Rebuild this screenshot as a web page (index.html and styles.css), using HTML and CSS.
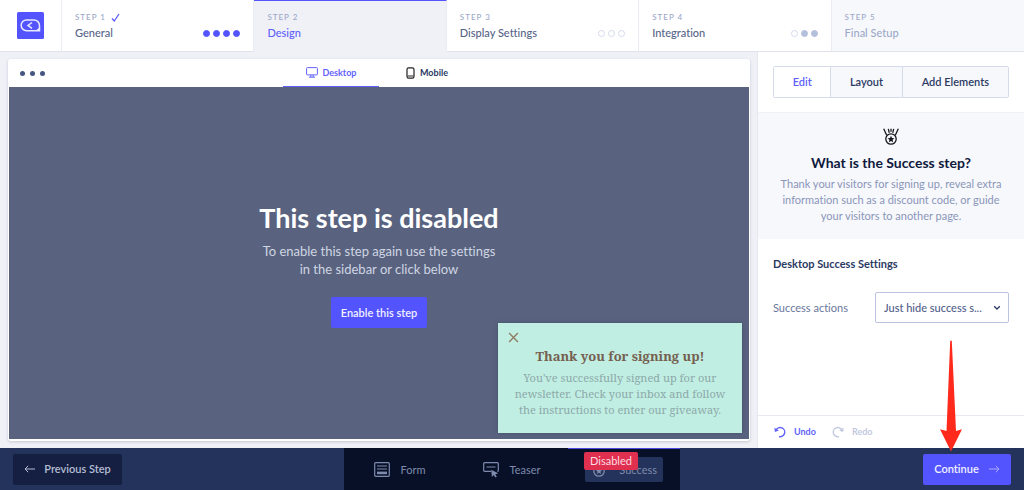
FILE: index.html
```html
<!DOCTYPE html>
<html lang="en">
<head>
<meta charset="utf-8">
<meta name="viewport" content="width=device-width, initial-scale=1">
<title>Campaign editor</title>
<link rel="stylesheet" href="styles.css">
</head>
<body>
<div class="app">
  <header class="steps">
    <a class="brand" href="#" aria-label="Home">
      <svg class="logo" viewBox="0 0 27 27" aria-hidden="true">
        <rect width="27" height="27" rx="1.5" fill="#5454ff"/>
        <path d="M9.500 8h7.500a5.500 5.500 0 0 1 5.500 5.500v5.200H9.500a5.350 5.350 0 0 1 0-10.700z" fill="none" stroke="#e8e9ff" stroke-width="1.500"/>
        <path d="M22.500 15.500v3.200H18.500z" fill="#e8e9ff"/>
        <path d="M15 10.500l-4 2.900 4 2.900" fill="none" stroke="#e8e9ff" stroke-width="1.500"/>
      </svg>
    </a>
    <a class="step" href="#">
      <span class="step-no">STEP 1
        <svg class="check" viewBox="0 0 9 9" aria-hidden="true"><path d="M1 5.500l2.300 2.500L8 1" fill="none" stroke="#5c5cff" stroke-width="1.300"/></svg>
      </span>
      <span class="step-row"><span class="step-name">General</span>
        <span class="dots"><i class="dot done"></i><i class="dot done"></i><i class="dot done"></i><i class="dot done"></i></span></span>
    </a>
    <a class="step current" href="#">
      <span class="step-no">STEP 2</span>
      <span class="step-row"><span class="step-name">Design</span></span>
    </a>
    <a class="step" href="#">
      <span class="step-no">STEP 3</span>
      <span class="step-row"><span class="step-name">Display Settings</span>
        <span class="dots"><i class="dot"></i><i class="dot"></i><i class="dot"></i></span></span>
    </a>
    <a class="step" href="#">
      <span class="step-no">STEP 4</span>
      <span class="step-row"><span class="step-name">Integration</span>
        <span class="dots"><i class="dot"></i><i class="dot part"></i><i class="dot part"></i></span></span>
    </a>
    <a class="step locked" href="#">
      <span class="step-no">STEP 5</span>
      <span class="step-row"><span class="step-name">Final Setup</span></span>
    </a>
  </header>

  <div class="work">
    <main class="stage">
      <div class="browser">
        <div class="browser-bar">
          <span class="window-dots"><i></i><i></i><i></i></span>
          <div class="devices">
            <button class="device active" type="button">
              <svg class="i-desktop" viewBox="0 0 12 11" aria-hidden="true"><g fill="none" stroke="currentColor"><rect x=".6" y=".6" width="10.800" height="7.300" rx=".8"/><path d="M4.800 8v2M7.200 8v2M3 10.200h6"/></g></svg>
              Desktop
            </button>
            <button class="device" type="button">
              <svg class="i-mobile" viewBox="0 0 9 12" aria-hidden="true"><rect x="1" y=".8" width="7" height="10.400" rx="1.600" fill="none" stroke="#222" stroke-width="1.200"/><path d="M1.500 9h6" stroke="#222"/></svg>
              Mobile
            </button>
          </div>
        </div>
        <div class="preview">
          <div class="disabled-note">
            <h1>This step is disabled</h1>
            <p>To enable this step again use the settings<br>in the sidebar or click below</p>
            <button class="btn primary enable" type="button">Enable this step</button>
          </div>
          <section class="popup">
            <button class="close" type="button" aria-label="Close">
              <svg viewBox="0 0 12 12" aria-hidden="true"><path d="M1.200 1.200l9.600 9.600M10.800 1.200L1.200 10.800" stroke="#8f7d63" stroke-width="1.500"/></svg>
            </button>
            <h2>Thank you for signing up!</h2>
            <p>You've successfully signed up for our newsletter. Check your inbox and follow the instructions to enter our giveaway.</p>
          </section>
        </div>
      </div>
    </main>

    <aside class="sidebar">
      <div class="modes">
        <button class="mode active" type="button">Edit</button>
        <button class="mode" type="button">Layout</button>
        <button class="mode" type="button">Add Elements</button>
      </div>
      <section class="about">
        <svg class="i-medal" viewBox="1 0 16 17" aria-hidden="true"><g fill="none" stroke="#15151c" stroke-width="1.300"><circle cx="9" cy="11" r="5.200"/><path d="M1.700.8l3 6.400M16.300.8l-3 6.400M6.300.8l1 4M11.700.8l-1 4M9 .8v3"/></g><path d="M9 7.700l1 2.200 2.400.3-1.800 1.600.5 2.400L9 13l-2.100 1.200.5-2.400-1.800-1.600 2.400-.3z" fill="#15151c"/></svg>
        <h2>What is the Success step?</h2>
        <p>Thank your visitors for signing up, reveal extra information such as a discount code, or guide your visitors to another page.</p>
      </section>
      <section class="settings">
        <h3>Desktop Success Settings</h3>
        <div class="field">
          <label for="action">Success actions</label>
          <span class="select-wrap">
            <select id="action"><option>Just hide success s...</option></select>
            <svg class="chevron" viewBox="0 0 8 6" aria-hidden="true"><path d="M1.200 1.200L4 4l2.800-2.800" fill="none" stroke="#2b3a63" stroke-width="1.300"/></svg>
          </span>
        </div>
      </section>
      <div class="history">
        <button class="undo" type="button">
          <svg viewBox="0 0 12 12" aria-hidden="true"><path d="M2 4.200A4.600 4.600 0 1 1 5 10.600" fill="none" stroke="currentColor" stroke-width="1.400"/><path d="M.3 1.800l.6 4.200 4-1.400z" fill="currentColor"/></svg>
          Undo
        </button>
        <button class="redo" type="button" disabled>
          <svg viewBox="0 0 12 12" aria-hidden="true"><path d="M10 4.200A4.600 4.600 0 1 0 7 10.600" fill="none" stroke="currentColor" stroke-width="1.400"/><path d="M11.700 1.800l-.6 4.200-4-1.400z" fill="currentColor"/></svg>
          Redo
        </button>
      </div>
    </aside>
  </div>

  <footer class="footer">
    <button class="btn previous" type="button">
      <svg class="arrow" viewBox="0 0 11 8" aria-hidden="true"><path d="M11 4H1M4.200.8L1 4l3.200 3.200" fill="none" stroke="currentColor"/></svg>
      Previous Step
    </button>
    <nav class="views">
      <a class="view" href="#">
        <svg class="i-form" viewBox="0 0 16 15" aria-hidden="true"><rect x=".7" y=".7" width="14.600" height="13.600" rx="1" fill="none" stroke="currentColor" stroke-width="1.200"/><path d="M3 4h10M3 7h10" stroke="currentColor" stroke-width="1.100"/><path d="M3 9.600h10v2.600H3z" fill="currentColor"/></svg>
        Form
      </a>
      <a class="view" href="#">
        <svg class="i-teaser" viewBox="0 0 16 16" aria-hidden="true"><path d="M8 9.400H1.600a.9.900 0 0 1-.9-.9V1.600a.9.900 0 0 1 .9-.9h12.800a.9.900 0 0 1 .9.900v6.900a.9.900 0 0 1-.9.900M3.500 5h9" fill="none" stroke="currentColor" stroke-width="1.200"/><path d="M8.200 7.800l7 3.400-2.900 1 1.500 2.500-1.500.9-1.500-2.500-1.900 2z" fill="currentColor"/></svg>
        Teaser
      </a>
      <a class="view active" href="#">
        <span class="chip">
          <svg class="i-success" viewBox="0 0 14 14" aria-hidden="true"><circle cx="7" cy="8" r="5.200" fill="none" stroke="currentColor" stroke-width="1.300"/><path d="M7 5l.9 2 2.200.2-1.600 1.500.4 2.200L7 9.800l-1.900 1.100.4-2.200-1.600-1.500L6.100 7z" fill="currentColor"/></svg>
          Success
          <span class="badge">Disabled</span>
        </span>
      </a>
    </nav>
    <div class="forward">
      <button class="btn primary continue" type="button">
        Continue
        <svg class="arrow" viewBox="0 0 11 8" aria-hidden="true"><path d="M0 4h10M6.800.8L10 4 6.800 7.200" fill="none" stroke="#a9a9ff"/></svg>
      </button>
      <svg class="pointer" viewBox="0 0 24 112" aria-hidden="true"><path d="M11.200 1q.8-1.200 1.600 0L17 91l6-1.800L12 111.500 1 89.200 7.500 91z" fill="#ff2a1c"/></svg>
    </div>
  </footer>
</div>
</body>
</html>
```
FILE: styles.css
```css
* { box-sizing: border-box; }

body {
  margin: 0;
  font-family: Lato, "Liberation Sans", sans-serif;
  font-size: 11px;
  font-variant-ligatures: none;
  line-height: 16px;
  color: #2b3a63;
}

h1, h2, h3, p { margin: 0; }
a { color: inherit; text-decoration: none; }
svg { display: block; flex: none; }

button, select {
  font: inherit;
  color: inherit;
  margin: 0;
  padding: 0;
  border: 0;
  background: none;
}

.app {
  min-height: 100vh;
  display: flex;
  flex-direction: column;
  background: #f0f1f7;
}

/* Step navigation */
.steps {
  display: grid;
  grid-template-columns: 62px repeat(5, 1fr);
  min-height: 52px;
}
.brand, .step {
  background: #fff;
  border-right: 1px solid #eaecf5;
  border-bottom: 1px solid #e1e3ec;
}
.brand { display: grid; place-items: center; }
.logo { width: 27px; height: 27px; }
.step {
  display: flex;
  flex-direction: column;
  padding: 11px 13px 8px 13px;
  color: #566488;
}
.step-no {
  display: flex;
  align-items: center;
  gap: 5px;
  font-size: 8px;
  line-height: 12px;
  letter-spacing: 1px;
  font-weight: 500;
  color: #9ca8c8;
}
.check { width: 9px; height: 9px; }
.step-row {
  display: flex;
  align-items: center;
  justify-content: space-between;
  font-weight: 500;
  line-height: 20px;
}
.dots { display: flex; gap: 3px; }
.dot {
  width: 7px;
  height: 7px;
  border-radius: 50%;
  border: 1px solid #d5daea;
}
.dot.done { background: #5454ff; border-color: #5454ff; }
.dot.part { background: #b5c0dc; border-color: #b5c0dc; }
.step.current {
  background: none;
  color: #6060fa;
  border-bottom-color: transparent;
  border-top: 1px solid #5454ff;
  padding-top: 10px;
}
.step.locked {
  background: #f7f8fc;
  color: #9ca8c8;
  border-right: 0;
}

/* Work area */
.work {
  flex: 1;
  display: grid;
  grid-template-columns: 1fr 267px;
}
.stage { display: flex; padding: 7px 7px 7px 8px; }
.browser {
  flex: 1;
  display: flex;
  flex-direction: column;
  background: #fff;
  border-radius: 3px;
  padding: 0 1px 2px;
  box-shadow: 0 1px 3px #c3c5d3;
}
.browser-bar {
  display: grid;
  grid-template-columns: 1fr auto 1fr;
}
.window-dots {
  display: flex;
  align-items: center;
  gap: 5px;
  padding-left: 11px;
}
.window-dots i {
  width: 5px;
  height: 5px;
  border-radius: 50%;
  background: #465682;
}
.devices { display: flex; }
.device {
  width: 96px;
  height: 28px;
  display: flex;
  align-items: center;
  justify-content: center;
  gap: 5px;
  font-size: 9px;
  font-weight: 700;
  border-bottom: 1px solid transparent;
}
.device.active { color: #6262fb; border-bottom-color: #6262fb; }
.i-desktop { width: 12px; height: 11px; }
.i-mobile { width: 9px; height: 12px; }

.preview {
  flex: 1;
  display: grid;
  place-items: center;
  position: relative;
  background: #59637f;
}
.disabled-note {
  display: flex;
  flex-direction: column;
  align-items: center;
  padding-top: 2px;
  text-align: center;
  color: #cfd5e3;
  line-height: 18px;
}
.disabled-note h1 {
  font-size: 27px;
  line-height: 36px;
  color: #fff;
  margin-bottom: 6px;
}
.disabled-note p { font-size: 13px; margin-bottom: 19px; }

.btn {
  display: flex;
  align-items: center;
  justify-content: center;
  height: 31px;
  border-radius: 2px;
  font-size: 11px;
  font-weight: 600;
}
.btn.primary { background: #5454ff; color: #f0f0ff; }
.enable { padding: 0 10px; }

.popup {
  position: absolute;
  right: 7px;
  bottom: 6px;
  width: 244px;
  padding: 23px 16px 15px;
  background: #c0eee3;
  box-shadow: 0 0 4px #46506c;
  text-align: center;
  font-family: "Noto Serif", "Liberation Serif", serif;
}
.popup h2 { font-size: 13px; line-height: 20px; color: #75604f; margin-bottom: 4px; }
.popup p { font-size: 11px; line-height: 16px; color: #8da9a9; }
.close { position: absolute; left: 10px; top: 9px; width: 11px; height: 11px; }

/* Sidebar */
.sidebar {
  display: flex;
  flex-direction: column;
  background: #fff;
  border-left: 1px solid #e6e8f1;
}
.modes {
  display: flex;
  margin: 14px 15px;
  border: 1px solid #d6dbea;
  border-radius: 2px;
}
.mode {
  height: 30px;
  flex: 1 1 71px;
  background: #f7f8fc;
  font-size: 11px;
  font-weight: 600;
  border-right: 1px solid #d6dbea;
}
.mode:first-child { flex-basis: 57px; }
.mode:last-child { flex-basis: 105px; border-right: 0; }
.mode.active { background: #fff; color: #6060fa; }

.about {
  padding: 15px 20px;
  background: #f7f8fc;
  border-top: 1px solid #eff1f6;
  text-align: center;
  display: flex;
  flex-direction: column;
  align-items: center;
}
.i-medal { width: 16px; height: 17px; margin-bottom: 8px; }
.about h2 { font-size: 14px; line-height: 20px; color: #101a3d; margin-bottom: 3px; }
.about p { font-size: 11px; color: #8a96b9; }

.settings { flex: 1; padding: 16px 15px; }
.settings h3 { font-size: 11px; line-height: 18px; margin-bottom: 19px; }
.field {
  display: flex;
  align-items: center;
  justify-content: space-between;
  font-size: 11px;
  color: #6a779b;
}
.select-wrap { position: relative; width: 134px; }
.select-wrap select {
  appearance: none;
  width: 100%;
  height: 31px;
  padding: 0 24px 0 8px;
  border: 1px solid #bac4e0;
  border-radius: 2px;
  background: #fff;
  color: #52608a;
  font-weight: 500;
}
.chevron { position: absolute; right: 8px; top: 13px; width: 8px; height: 6px; pointer-events: none; }

.history {
  display: flex;
  gap: 16px;
  padding: 8px 16px;
  border-top: 1px solid #e6e8f1;
  font-size: 9px;
  font-weight: 700;
}
.history button { display: flex; align-items: center; gap: 8px; }
.history svg { width: 12px; height: 12px; }
.undo { color: #6262fb; }
.redo { color: #c2c9df; }

/* Bottom bar */
.footer {
  display: grid;
  grid-template-columns: 1fr auto 1fr;
  min-height: 42px;
  background: #24335b;
}
.footer .btn { align-self: center; }
.previous {
  width: 109px;
  margin-left: 13px;
  gap: 9px;
  background: #141f41;
  color: #b5bdd4;
}
.arrow { width: 11px; height: 8px; }
.views { display: flex; background: #081028; }
.view {
  width: 112px;
  display: flex;
  align-items: center;
  justify-content: center;
  gap: 10px;
  color: #7e8bac;
  border-top: 1px solid transparent;
}
.view.active { border-top-color: #4a4ae0; }
.i-form { width: 16px; height: 15px; }
.i-teaser { width: 16px; height: 16px; }
.i-success { width: 14px; height: 14px; }
.chip {
  position: relative;
  display: flex;
  align-items: center;
  justify-content: space-between;
  width: 78px;
  height: 25px;
  padding: 0 6px 0 7px;
  border-radius: 2px;
  background: #24335b;
}
.badge {
  position: absolute;
  left: -1px;
  top: -5px;
  padding: 0 6px;
  line-height: 18px;
  border-radius: 2px;
  background: #e0304f;
  color: #fbdce3;
}
.forward { display: flex; justify-content: flex-end; position: relative; }
.continue { width: 88px; margin-right: 13px; gap: 10px; }
.pointer {
  position: absolute;
  right: 61px;
  bottom: 38px;
  width: 24px;
  height: 112px;
  pointer-events: none;
}
```
